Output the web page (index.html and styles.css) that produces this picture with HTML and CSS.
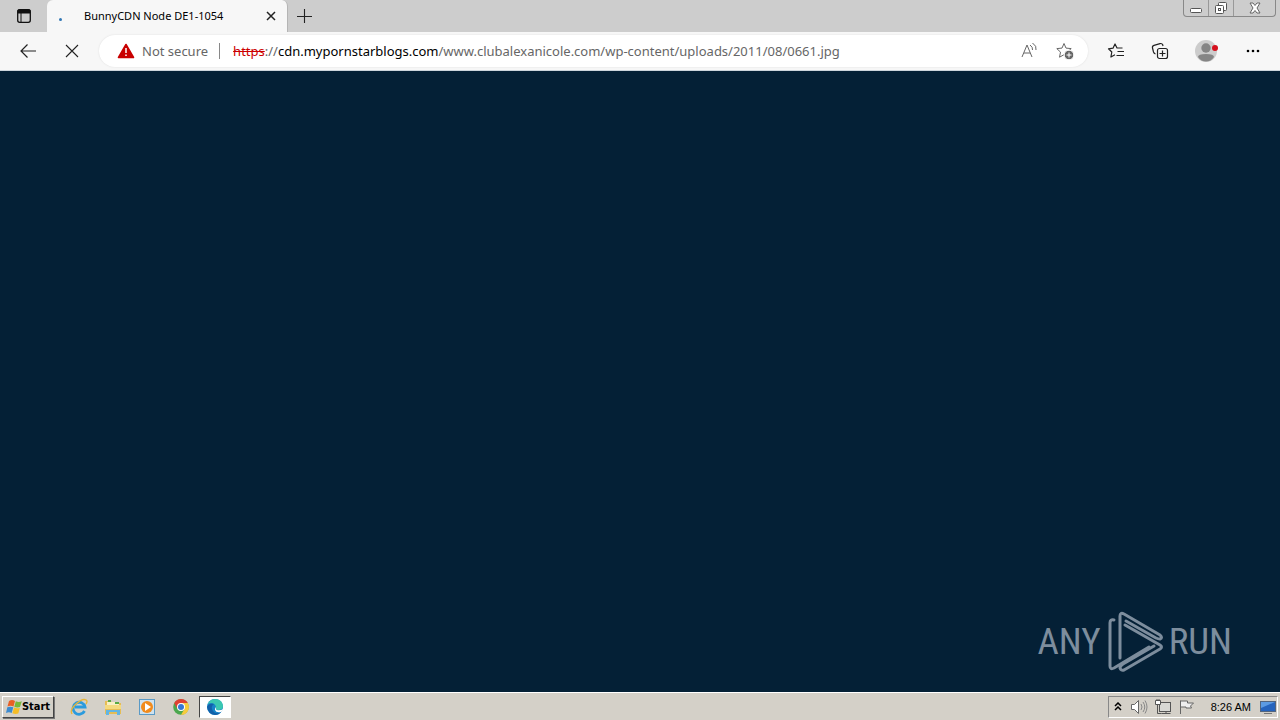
FILE: index.html
```html
<!DOCTYPE html>
<html lang="en">
<head>
<meta charset="utf-8">
<title>BunnyCDN Node DE1-1054</title>
<link rel="stylesheet" href="styles.css">
</head>
<body>
<header class="tabstrip">
  <button class="tab-actions" aria-label="Tab actions"><svg width="16" height="16" viewBox="0 0 16 16"><rect x="1.7" y="1.7" width="12.6" height="12.6" rx="2" fill="none" stroke="#111" stroke-width="1.3"/><path d="M2 2h12v3H2zM5 5v9" stroke="#111" fill="#111"/></svg></button>
  <div class="tab">
    <span class="loading"></span>
    <span class="tab-title">BunnyCDN Node DE1-1054</span>
    <button class="tab-close" aria-label="Close tab"><svg width="10" height="10" viewBox="0 0 10 10"><path d="M1 1l8 8M9 1L1 9" stroke="#222" stroke-width="1.5"/></svg></button>
  </div>
  <button class="new-tab" aria-label="New tab"><svg width="16" height="16" viewBox="0 0 16 16"><path d="M8.500 1v14M1 8.500h15" stroke="#222" stroke-width="1.1"/></svg></button>
  <div class="window-controls">
    <button class="win" aria-label="Minimize"><svg width="12" height="14" viewBox="0 0 12 14"><rect x=".5" y="7.500" width="11" height="4" rx="1" fill="#fff" stroke="#555"/></svg></button>
    <button class="win" aria-label="Restore"><svg width="14" height="14" viewBox="0 0 14 14"><g fill="#fff" stroke="#555"><rect x="4.500" y="1.500" width="8" height="8" rx="1"/><rect x="1.500" y="4.500" width="8" height="8" rx="1"/><rect x="4.500" y="7.500" width="2" height="2"/></g></svg></button>
    <button class="win win-close" aria-label="Close"><svg width="12" height="12" viewBox="0 0 12 12"><path d="M1 1h3l2 2.500L8 1h3L8 6l3 5H8L6 8.500 4 11H1l3-5z" fill="#fff" stroke="#666"/></svg></button>
  </div>
</header>
<nav class="toolbar">
  <button class="tool" aria-label="Back"><svg width="18" height="16" viewBox="0 0 18 16"><path d="M17 8H2M8.500 1.500L2 8l6.500 6.500" fill="none" stroke="#222" stroke-width="1.2"/></svg></button>
  <button class="tool" aria-label="Stop"><svg width="14" height="14" viewBox="0 0 14 14"><path d="M1 1l12 12M13 1L1 13" stroke="#222" stroke-width="1.1"/></svg></button>
  <div class="address">
    <button class="security"><svg width="18" height="16" viewBox="0 0 18 16"><path d="M9 1.500L16.500 14.500h-15z" fill="#c80000" stroke="#c80000" stroke-width="1.600" stroke-linejoin="round"/><path d="M9 5v5M9 11.500v1.500" stroke="#fff" stroke-width="1.500"/></svg>Not secure</button>
    <div class="url" role="textbox" contenteditable="true" spellcheck="false" aria-label="Address"><s class="scheme">https</s>://<span class="host">cdn.mypornstarblogs.com</span>/www.clubalexanicole.com/wp-content/uploads/2011/08/0661.jpg</div>
    <button class="addr-btn" aria-label="Read aloud"><svg width="18" height="18" viewBox="0 0 18 18" fill="none" stroke="#666"><path d="M2 15L7 3l5 12M4 11h6M10 3q3 2 2.500 5M12.500 1q4.500 3 3.500 7"/></svg></button>
    <button class="addr-btn" aria-label="Add to favorites"><svg width="18" height="18" viewBox="0 0 18 18"><path d="M8 1.500l2 4.600 5.200.5-3.900 3.500 1 4.900L8 12.700l-4.500 2.500 1-5.100L.8 6.600l5.200-.5z" fill="none" stroke="#666" stroke-linejoin="round"/><circle cx="13" cy="13" r="4.800" fill="#666" stroke="#fff"/><path d="M10.500 13h5M13 10.500v5" stroke="#fff"/></svg></button>
  </div>
  <button class="tool" aria-label="Favorites"><svg width="18" height="18" viewBox="0 0 18 18" fill="none" stroke="#222" stroke-width="1.200" stroke-linejoin="round"><path d="M15.500 6H10L8 2 6 6.200l-4.500.6 3.300 3.200-.9 5L8 12.800M10.500 9.500H17M9.500 13.500H17"/></svg></button>
  <button class="tool" aria-label="Collections"><svg width="18" height="18" viewBox="0 0 18 18" fill="none" stroke="#222" stroke-width="1.200"><rect x="6.500" y="6.500" width="10" height="10" rx="2"/><path d="M11.500 8.500v6M8.500 11.500h6M4.500 12q-1.500-.5-2-2L1.500 6q-.5-2 1.500-2.600L9 1.600q2-.5 2.700 1.200L12 4"/></svg></button>
  <button class="tool profile" aria-label="Profile"><svg width="24" height="24" viewBox="0 0 24 24"><circle cx="11" cy="12" r="11" fill="#ccc"/><circle cx="11" cy="9" r="4.700" fill="#858585"/><path d="M3 18q0-3 8-3t8 3q-3 4.500-8 4.500T3 18" fill="#858585"/><circle cx="20" cy="9" r="3" fill="#d5101d"/></svg></button>
  <button class="tool" aria-label="Menu"><svg width="16" height="4" viewBox="0 0 16 4"><circle cx="3" cy="2" r="1.300"/><circle cx="8" cy="2" r="1.300"/><circle cx="13" cy="2" r="1.300"/></svg></button>
</nav>
<main class="page">
  <div class="watermark">
    <span>ANY</span>
    <svg width="56" height="64" viewBox="0 0 56 64" fill="none" stroke="currentColor" stroke-width="3" stroke-linejoin="round" stroke-linecap="round"><path d="M7 10Q3 9 3 13V56Q3 60 7 58L42 37"/><path d="M13 48V6Q13 2 17 4L53 25Q56 28 53 29Q51 29 49 28L19 11"/><path d="M18 15L53 35Q56 37 53 39L17 60Q14 61 13 58Q13 56 16 54L47 36"/></svg>
    <span>RUN</span>
  </div>
</main>
<footer class="taskbar">
  <button class="start"><svg width="16" height="16" viewBox="0 0 16 16"><path d="M3 2q3-2 6 0L7.500 7.500q-3-1.500-6 0z" fill="#e96025"/><path d="M9.800 2.300q3 1.500 6 0L14 8q-3 1-5.700-.3z" fill="#76b93a"/><path d="M1.300 8.300q3-1.200 6 0L5.700 14Q3 12.500 0 14z" fill="#3c8bd0"/><path d="M8 8.500q3 1.500 5.900.3L12.300 14.500q-3 1-5.900-.3z" fill="#f5bd27"/></svg>Start</button>
  <div class="launchers">
    <button class="launch" aria-label="Internet Explorer"><svg width="18" height="18" viewBox="0 0 18 18" fill="none"><path d="M14.500 13A6 6 0 1 1 15 9H5" stroke="#2b9bdd" stroke-width="2.800"/><path d="M2 16Q-.5 12 6 6t10-4q2 1 0 4" stroke="#e7b53a" stroke-width="1.400"/></svg></button>
    <button class="launch" aria-label="File Explorer"><svg width="18" height="18" viewBox="0 0 18 18"><path d="M1 3h6l1 2h9v11H1z" fill="#e6bd55"/><path d="M3 4h12v7H3z" fill="#f8f0c5"/><path d="M1 7h16v4H1z" fill="#f4da80"/><path d="M2 17v-5h14v5h-3v-3H5v3z" fill="#62b5e3"/><path d="M4 3h3M11 5h4" stroke="#59a943" stroke-width="2"/></svg></button>
    <button class="launch" aria-label="Media Player"><svg width="18" height="18" viewBox="0 0 18 18"><rect x="1.500" y="1.500" width="15" height="15" fill="#cfe2ef" stroke="#5a9ac6"/><circle cx="9" cy="9" r="6" fill="#f18b1d"/><path d="M7 5l6 4-6 4z" fill="#fff"/></svg></button>
    <button class="launch" aria-label="Chrome"><svg width="18" height="18" viewBox="0 0 18 18"><circle cx="9" cy="9" r="7.800" fill="#4ba74e"/><path d="M2.200 5A7.800 7.800 0 0 1 15.800 5H9L5.500 11z" fill="#df4133"/><path d="M15.800 5A7.800 7.800 0 0 1 9 16.800L12.500 11 9 5z" fill="#f7cb3c"/><circle cx="9" cy="9" r="4" fill="#fff"/><circle cx="9" cy="9" r="3" fill="#3677d5"/></svg></button>
    <button class="launch active" aria-label="Microsoft Edge"><svg width="18" height="18" viewBox="0 0 18 18"><circle cx="9" cy="9" r="8" fill="#1683c8"/><path d="M1.200 8Q3 1 9 1q7 0 8 7 0 4-5 4-3 0-2-3Q9 5 5 5 2 5 1.200 8" fill="#3bc8b1"/><path d="M1 9q2-4 7-3-4 3-1 7t8 1q-2 3-6 3-7-1-8-8" fill="#1260a9"/><path d="M10 9q-1 3 2 3.200t5-1.200q0 2-2 3-5 1-6-2-.5-2 1-3" fill="#fff"/></svg></button>
  </div>
  <div class="tray">
    <button class="tray-btn tray-expand" aria-label="Show hidden icons"><svg width="8" height="10" viewBox="0 0 8 10"><path d="M1 4l3-3 3 3M1 8l3-3 3 3" fill="none" stroke="#000" stroke-width="1.500"/></svg></button>
    <button class="tray-btn" aria-label="Volume"><svg width="18" height="16" viewBox="0 0 18 16" fill="none" stroke="#666"><path d="M1.500 5.500h3l4-4v13l-4-4h-3z" fill="#fff"/><path d="M11 5q2 3 0 6M13 3q3.500 5 0 10M15 1.500q4 6.500 0 13" stroke="#888"/></svg></button>
    <button class="tray-btn" aria-label="Network"><svg width="18" height="16" viewBox="0 0 18 16" fill="#d8d8d4" stroke="#555"><rect x="5.500" y="3.500" width="11" height="9"/><path d="M7.500 14.500h9M12 12v2M3.500 6v8.500h4" fill="none"/><path d="M1.500 1.500v4h5v-4zM3 0v2M5 0v2" fill="#fff"/></svg></button>
    <button class="tray-btn" aria-label="Action Center"><svg width="18" height="16" viewBox="0 0 18 16"><path d="M2.500 15V1.500M2.500 2h7v2h6l-3 3 1 2H8V8H3" fill="#eee" stroke="#666"/></svg></button>
    <time class="clock">8:26 AM</time>
    <button class="tray-btn" aria-label="Show desktop"><svg width="18" height="16" viewBox="0 0 18 16"><rect x="1.500" y="2.500" width="15" height="10" fill="#2664bd" stroke="#53657e"/><path d="M2 3h14L2 9z" fill="#5c9be3"/><path d="M5 14.500h8" stroke="#777"/></svg></button>
  </div>
</footer>
</body>
</html>
```
FILE: styles.css
```css
* { box-sizing: border-box; }
body {
  margin: 0;
  min-height: 100vh;
  display: flex;
  flex-direction: column;
  font: 12px/16px "Noto Sans", sans-serif;
  color: #000;
}
button {
  display: flex;
  align-items: center;
  justify-content: center;
  padding: 0;
  border: 0;
  background: transparent;
  font: inherit;
  color: inherit;
}
svg { display: block; flex: none; }
.tabstrip { display: flex; height: 32px; background: #cdcdcd; }
.tab-actions { width: 47px; }
.tab {
  width: 241px;
  display: flex;
  align-items: center;
  padding: 0 10px 0 12px;
  background: #f7f7f7;
  border-right: 1px solid #b5b5b5;
  border-radius: 6px 6px 0 0;
}
.loading { width: 3px; height: 3px; margin: 6px 22px 0 0; border-radius: 2px; background: #3177b5; }
.tab-title { flex: 1; font: 12px/16px "Noto Sans", sans-serif; font-size: 11px; white-space: nowrap; }
.tab-close { width: 12px; height: 20px; }
.new-tab { width: 32px; }
.window-controls {
  display: flex;
  height: 17px;
  margin: 0 4px 0 auto;
  border: 1px solid #888;
  border-top: 0;
  border-radius: 0 0 4px 4px;
}
.win { width: 25px; border-right: 1px solid #999; }
.win-close { width: 41px; border-right: 0; }
.toolbar {
  display: flex;
  align-items: center;
  height: 39px;
  padding: 0 6px;
  background: #f7f7f7;
  border-bottom: 1px solid #cdd5dc;
}
.tool { width: 44px; height: 32px; }
.address + .tool { margin-left: 6px; }
.tool.profile { width: 50px; }
.tool:last-child { width: 42px; }
.address {
  flex: 1;
  min-width: 0;
  height: 32px;
  display: flex;
  align-items: center;
  margin-left: 5px;
  padding: 0 14px 0 18px;
  border-radius: 16px;
  background: #fff;
  box-shadow: 0 0 2px #ddd;
  font-size: 13px;
  color: #666;
}
.security { gap: 7px; height: 16px; padding-right: 11px; margin-right: 13px; border-right: 1px solid #888; }
.url { flex: 1; min-width: 0; overflow: hidden; white-space: nowrap; outline: 0; }
.scheme { color: #c00; }
.host { color: #000; }
.addr-btn { width: 18px; height: 24px; margin-left: 18px; }
.page { flex: 1; display: flex; align-items: flex-end; justify-content: flex-end; padding: 0 48px 18px 0; background: #042036; }
.watermark {
  display: flex;
  align-items: center;
  gap: 6px;
  color: #7d8d9d;
  font: 37px/48px "Liberation Sans Narrow", "Roboto Condensed", "DejaVu Sans Condensed", sans-serif;
}
.taskbar {
  display: flex;
  align-items: center;
  height: 28px;
  padding: 2px;
  background: #d4d0c8;
  border-top: 1px solid #fff;
}
.start {
  width: 52px;
  height: 22px;
  gap: 0;
  border: 1px solid;
  border-color: #fff #444 #444 #fff;
  box-shadow: 1px 1px 0 #777;
  font: bold 11px/16px "DejaVu Sans Condensed", "Noto Sans", sans-serif;
}
.launchers { display: flex; margin-left: 8px; }
.launch { width: 34px; height: 22px; }
.active { width: 32px; margin-left: 1px; border: 1px solid; border-color: #444 #fff #fff #444; background: #fff; }
.tray {
  display: flex;
  align-items: center;
  height: 22px;
  margin-left: auto;
  border: 1px solid;
  border-color: #888 #fff #fff #888;
}
.tray-btn { width: 24px; height: 20px; }
.tray-expand { width: 18px; }
.clock { padding: 0 2px 0 12px; font: 11px/16px "Liberation Sans", sans-serif; }
.clock + .tray-btn { width: 18px; margin-left: 6px; }
```
